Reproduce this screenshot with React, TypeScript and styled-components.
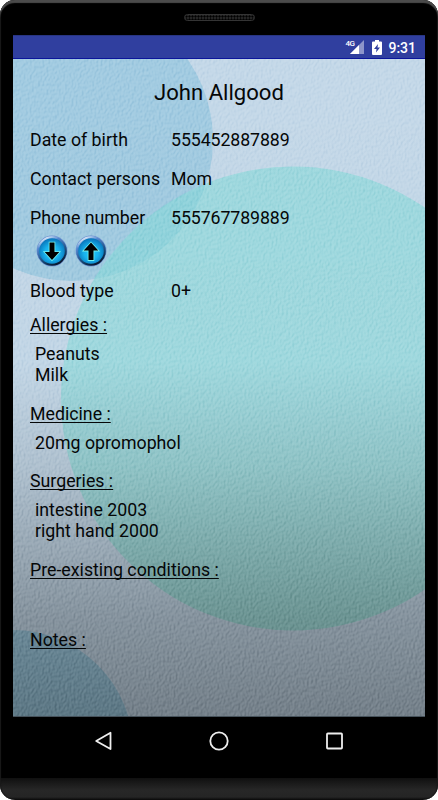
import React from "react";
import styled, { createGlobalStyle } from "styled-components";

const GlobalStyle = createGlobalStyle`
  * { box-sizing: border-box; }
  body { margin: 0; background: #fff; font-family: Roboto, "Liberation Sans", sans-serif; color: #050708; }
`;

const Phone = styled.main`
  width: 438px;
  height: 800px;
  padding: 0 13px;
  border-radius: 15px;
  overflow: hidden;
  background: linear-gradient(#000 0 778px, #101010 778px, #272727 790px, #252525 797px, #080808 800px);
  box-shadow: inset 0 3px 1px #4b4b4b, inset 1px 0 1px #151515, inset -1px 0 1px #151515;
  display: flex;
  flex-direction: column;
`;

const Earpiece = styled.div`
  height: 35px;
  flex: none;
  display: flex;
  justify-content: center;
  padding-top: 14px;
`;

const Grille = styled.div`
  width: 71px;
  height: 7px;
  border: 1px solid #343434;
  border-radius: 4px;
  background: radial-gradient(circle, #000 35%, #292929 70%) 0 0 / 3px 3px;
`;

const StatusBar = styled.header`
  height: 24px;
  flex: none;
  background: #303f9f;
  border-bottom: 1px solid #0b159b;
  border-top: 1px solid #283583;
  color: #fff;
  display: flex;
  justify-content: flex-end;
  align-items: center;
  padding-right: 9px;
`;

const Clock = styled.time`
  font-size: 14px;
  font-weight: 500;
  line-height: 22px;
  margin-left: 6px;
  padding-top: 1px;
`;

const NetworkLabel = styled.span`
  font-size: 8px;
  font-weight: 500;
  line-height: 8px;
  letter-spacing: -0.5px;
  align-self: flex-start;
  margin: 4px -5px 0 0;
`;

const BatteryIcon = styled.svg`
  margin-left: 8px;
`;

const Screen = styled.section`
  position: relative;
  isolation: isolate;
  height: 658px;
  flex: none;
  padding: 20px 17px 0;
  font-size: 17.75px;
  line-height: 21px;
`;

const Wallpaper = styled.svg`
  position: absolute;
  inset: 0;
  z-index: -1;
`;

const Grain = styled.rect`
  mix-blend-mode: soft-light;
`;

const Name = styled.h1`
  margin: 0 0 24px;
  font-size: 22.1px;
  font-weight: 400;
  line-height: 27px;
  text-align: center;
`;

const Field = styled.div<{ $gap: number }>`
  display: grid;
  grid-template-columns: 141px 1fr;
  margin-bottom: ${(p) => p.$gap}px;
`;

const FieldValue = styled.span`
  letter-spacing: -0.1px;
`;

const CallButtons = styled.div`
  display: flex;
  gap: 7px;
  padding-left: 6px;
  height: 32px;
  margin-bottom: 14px;
`;

const RoundButton = styled.button`
  width: 32px;
  height: 32px;
  padding: 0;
  border: 0;
  background: none;
`;

const Section = styled.section<{ $height: number }>`
  height: ${(p) => p.$height}px;
`;

const Heading = styled.h2`
  display: table;
  margin: 0 0 8px;
  height: 21px;
  font-size: inherit;
  font-weight: 400;
  text-decoration: underline;
  text-decoration-thickness: 1px;
  text-underline-offset: 2px;
  text-decoration-skip-ink: none;
`;

const Entry = styled.div`
  padding-left: 5px;
`;

const NavBar = styled.nav`
  height: 48px;
  flex: none;
  display: flex;
  justify-content: space-between;
  align-items: center;
  padding: 0 78px;
`;

const NavButton = styled.button`
  padding: 0;
  border: 0;
  background: none;
  width: 24px;
  height: 24px;
`;

function ArrowButton({ id, up }: { id: string; up?: boolean }) {
  return (
    <RoundButton aria-label={up ? "Previous" : "Next"}>
      <svg width="32" height="32" viewBox="0 0 32 32">
        <defs>
          <radialGradient id={id} cx="50%" cy="56%" r="52%">
            <stop offset="0" stopColor="#20ccff" />
            <stop offset=".5" stopColor="#19b2ed" />
            <stop offset="1" stopColor="#0873b8" />
          </radialGradient>
          <linearGradient id={id + "rim"} x1=".2" y1="0" x2=".7" y2="1">
            <stop offset="0" stopColor="#f4fbff" />
            <stop offset=".25" stopColor="#5288d0" />
            <stop offset=".7" stopColor="#174875" />
            <stop offset="1" stopColor="#08152b" />
          </linearGradient>
        </defs>
        <circle cx="16" cy="16" r="15.4" fill="#5879c9" opacity=".7" />
        <circle cx="16" cy="16" r="13.8" fill={`url(#${id})`} stroke={`url(#${id}rim)`} strokeWidth="2" />
        <path
          transform={up ? "rotate(180 16 16.3)" : undefined}
          d="M13.5 7.5h5v9.5h4.800L16 25l-7.300-8h4.800z"
          fill="#000"
          stroke="#77f1ef"
          strokeWidth="1.6"
          paintOrder="stroke"
        />
      </svg>
    </RoundButton>
  );
}

function Backdrop() {
  return (
    <Wallpaper width="412" height="658" viewBox="13 59 412 658" aria-hidden="true">
      <defs>
        <linearGradient id="shade" x1="0" y1="0" x2="0" y2="1">
          <stop offset="0" stopColor="#000" stopOpacity="0" />
          <stop offset=".46" stopColor="#000" stopOpacity=".01" />
          <stop offset=".62" stopColor="#000" stopOpacity=".11" />
          <stop offset=".85" stopColor="#000" stopOpacity=".32" />
          <stop offset="1" stopColor="#000" stopOpacity=".41" />
        </linearGradient>
        <linearGradient id="teal" x1="0" y1="0" x2="0" y2="1">
          <stop offset="0" stopColor="#84d9d8" />
          <stop offset=".5" stopColor="#88dcda" />
          <stop offset="1" stopColor="#84dccc" />
        </linearGradient>
        <filter id="grain" x="0" y="0" width="100%" height="100%" colorInterpolationFilters="sRGB">
          <feTurbulence type="fractalNoise" baseFrequency=".48 .34" numOctaves="1" seed="8" result="n" />
          <feDiffuseLighting in="n" surfaceScale="1.5" diffuseConstant="1" lightingColor="#fff">
            <feDistantLight azimuth="215" elevation="31" />
          </feDiffuseLighting>
        </filter>
      </defs>
      <rect x="13" y="59" width="412" height="658" fill="#c4d8e8" />
      <circle cx="72" cy="140" r="141" fill="#a2cbe1" />
      <circle cx="293" cy="398.5" r="232" fill="url(#teal)" opacity=".58" />
      <circle cx="13" cy="750" r="120" fill="#9dcae0" />
      <rect x="13" y="59" width="412" height="658" fill="url(#shade)" />
      <Grain x="13" y="59" width="412" height="658" filter="url(#grain)" opacity=".26" />
      <path d="M13 716.5h412" stroke="#46525b" />
    </Wallpaper>
  );
}

export default function App() {
  return (
    <>
      <GlobalStyle />
      <Phone>
        <Earpiece><Grille /></Earpiece>
        <StatusBar>
          <NetworkLabel>4G</NetworkLabel>
          <svg width="15" height="15" viewBox="0 0 15 15">
            <path d="M15 0V14H1z" fill="#8d95ca" />
            <path d="M10 5V14H1z" fill="#fff" />
          </svg>
          <BatteryIcon width="10" height="15" viewBox="0 0 10 15">
            <path d="M3 0h4v1.500h2q1 0 1 1V14q0 1-1 1H1q-1 0-1-1V2.500q0-1 1-1h2z" fill="#fff" />
            <path d="M6 4L2 9h2.500L4 12.500 8 7.500H5.500z" fill="#303f9f" />
          </BatteryIcon>
          <Clock>9:31</Clock>
        </StatusBar>
        <Screen>
          <Backdrop />
          <Name>John Allgood</Name>
          <Field $gap={18}><span>Date of birth</span><FieldValue>555452887889</FieldValue></Field>
          <Field $gap={18}><span>Contact persons</span><FieldValue>Mom</FieldValue></Field>
          <Field $gap={6}><span>Phone number</span><FieldValue>555767789889</FieldValue></Field>
          <CallButtons>
            <ArrowButton id="down" />
            <ArrowButton id="up" up />
          </CallButtons>
          <Field $gap={13}><span>Blood type</span><FieldValue>0+</FieldValue></Field>
          <Section $height={89}>
            <Heading>Allergies :</Heading>
            <Entry>Peanuts</Entry>
            <Entry>Milk</Entry>
          </Section>
          <Section $height={67}>
            <Heading>Medicine :</Heading>
            <Entry>20mg opromophol</Entry>
          </Section>
          <Section $height={89}>
            <Heading>Surgeries :</Heading>
            <Entry>intestine 2003</Entry>
            <Entry>right hand 2000</Entry>
          </Section>
          <Section $height={70}>
            <Heading>Pre-existing conditions :</Heading>
          </Section>
          <Section $height={28}>
            <Heading>Notes :</Heading>
          </Section>
        </Screen>
        <NavBar>
          <NavButton aria-label="Back">
            <svg width="24" height="24" viewBox="0 0 24 24" fill="none" stroke="#eee" strokeWidth="1.8" strokeLinejoin="round">
              <path d="M19.500 3.800V20L5.200 12z" />
            </svg>
          </NavButton>
          <NavButton aria-label="Home">
            <svg width="24" height="24" viewBox="0 0 24 24" fill="none" stroke="#eee" strokeWidth="1.8">
              <circle cx="12" cy="12" r="8.700" />
            </svg>
          </NavButton>
          <NavButton aria-label="Overview">
            <svg width="24" height="24" viewBox="0 0 24 24" fill="none" stroke="#eee" strokeWidth="1.8">
              <rect x="4" y="4.500" width="15" height="15" rx=".8" />
            </svg>
          </NavButton>
        </NavBar>
      </Phone>
    </>
  );
}
